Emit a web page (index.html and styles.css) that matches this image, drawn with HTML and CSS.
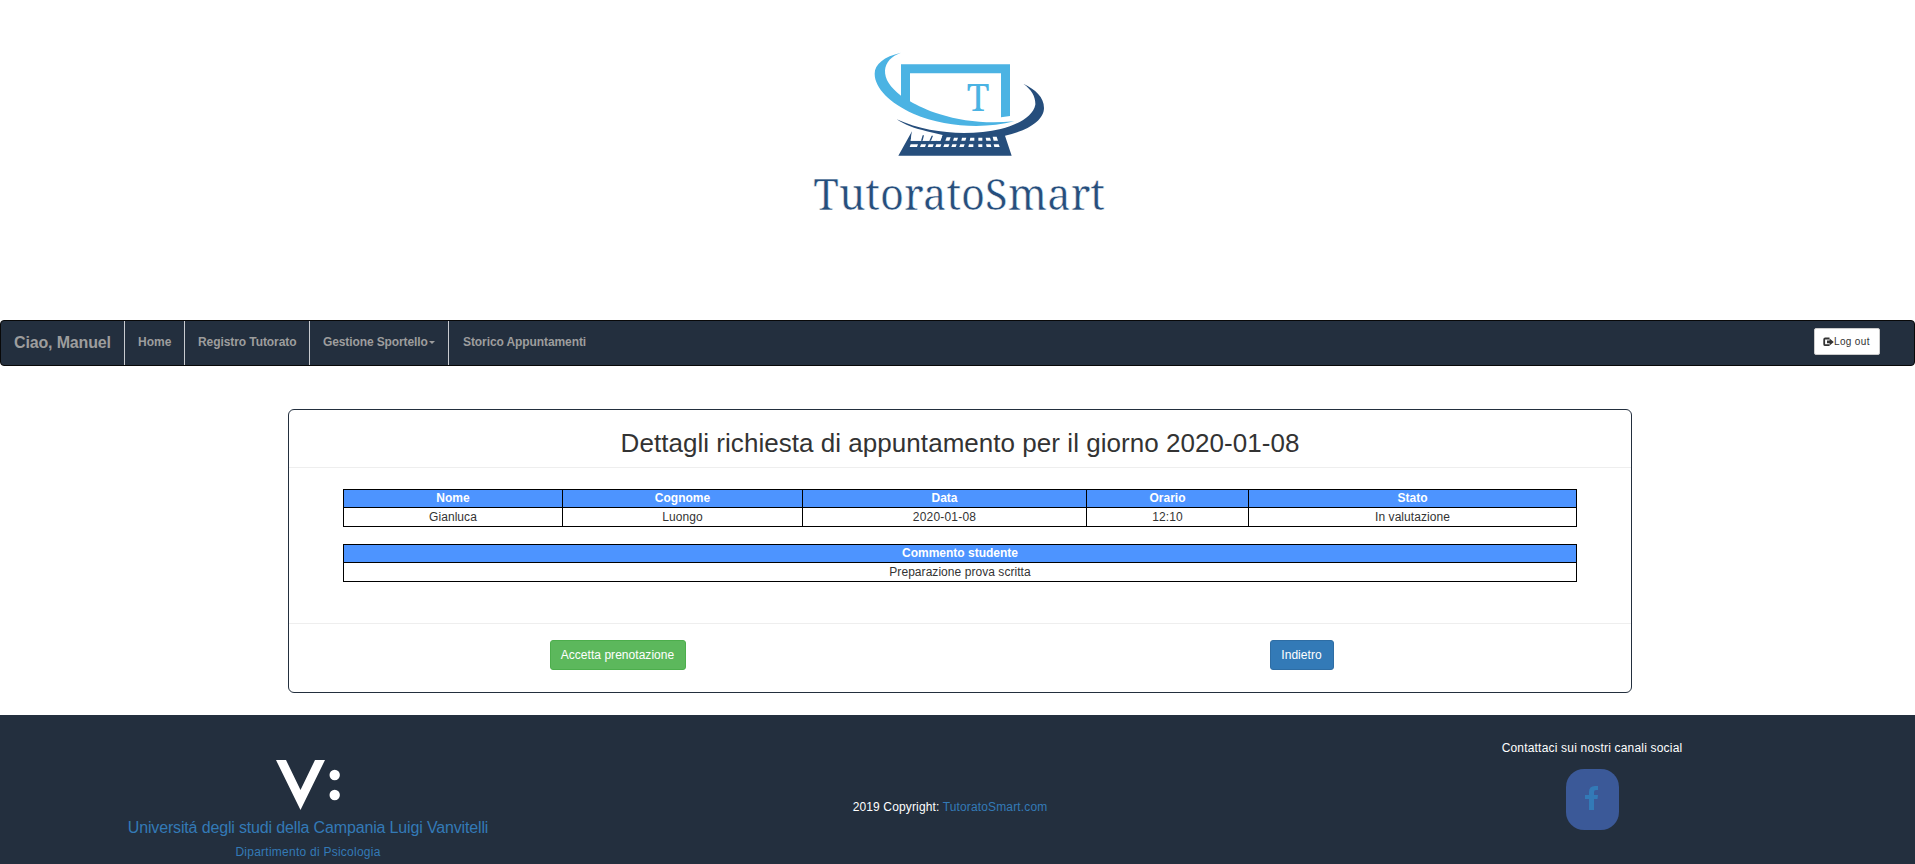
FILE: index.html
```html
<!DOCTYPE html>
<html lang="it">
<head>
<meta charset="utf-8">
<title>TutoratoSmart</title>
<link rel="stylesheet" href="styles.css">
</head>
<body>
<header class="banner">
  <svg class="logo" viewBox="0 0 1020 600" role="img" aria-label="TutoratoSmart">
    <g transform="translate(240 54)">
      <path fill="#4bb3e3" d="M93 14C42 26 14 48 14 77C14 120 60 165 130 197C225 237 340 244 433 220C350 228 275 220 210 199C170 187 143 173 120 160V76H393V208L420 204V49H93V143C60 118 44 93 45 67C47 43 64 24 93 14Z"/>
      <path fill="#264e7c" d="M460 107C486 126 497 147 496 170C489 204 446 230 392 243C300 264 180 259 80 214C104 231 134 241 170 250L218 261L210 278H122L126 250L85 323H425L405 263C475 248 522 216 522 180C522 147 496 124 460 107Z"/>
      <path fill="#fff" d="M126 252L131 278H122ZM126 253L160 262L153 278H124ZM162 262L185 263L178 278H156ZM187 263L205 264L199 278H181Z"/>
      <path fill="#264e7c" d="M153 278L158 262L162 262L158 278ZM178 278L185 263L189 263L183 278Z"/>
      <path fill="#fff" d="M206 265L216 265L212 278H200ZM230 268H242L238 278H226ZM252 269H264L261 278H249ZM276 269H289L286 278H274ZM301 269H313V278H299ZM325 269H337V278H325ZM347 269H360L363 278H349ZM368 266H380L384 278H371ZM122 289H144L141 297H119ZM153 289H168L165 297H150ZM176 289H191L188 297H173ZM199 289H214L211 297H196ZM223 289H238L235 297H220ZM247 289H260L257 297H244ZM271 289H284L281 297H268ZM297 289H310V297H295ZM325 289H337V297H325ZM348 289H362L364 297H350ZM371 289H386L389 297H373Z"/>
    </g>
    <text class="logo-letter" x="530" y="242" textLength="68" lengthAdjust="spacingAndGlyphs">T</text>
    <text class="logo-name" x="70" y="539" textLength="875" lengthAdjust="spacingAndGlyphs">TutoratoSmart</text>
  </svg>
</header>
<nav class="navbar">
  <a class="nav-item brand">Ciao, Manuel</a>
  <a class="nav-item home">Home</a>
  <a class="nav-item registro">Registro Tutorato</a>
  <a class="nav-item gestione"><span>Gestione Sportello</span><span class="caret"></span></a>
  <a class="nav-item storico">Storico Appuntamenti</a>
  <button class="logout"><svg class="logout-icon" viewBox="0 0 11 10"><path d="M6.500 1.500H2.200Q1.200 1.500 1.200 2.500V7.200Q1.200 8.200 2.200 8.200H6.500" fill="none" stroke="#333" stroke-width="1.800"/><path d="M4 3.500H6.600V1.400L10.800 4.900L6.600 8.400V6.300H4Z" fill="#333"/></svg><span>Log out</span></button>
</nav>
<main class="card">
  <h2 class="title"><span>Dettagli richiesta di appuntamento per il giorno 2020-01-08</span></h2>
  <section class="details">
    <table class="table">
      <colgroup><col class="c1"><col class="c2"><col class="c3"><col class="c4"><col class="c5"></colgroup>
      <tr><th>Nome</th><th>Cognome</th><th>Data</th><th>Orario</th><th>Stato</th></tr>
      <tr><td>Gianluca</td><td>Luongo</td><td class="date">2020-01-08</td><td>12:10</td><td>In valutazione</td></tr>
    </table>
    <table class="table">
      <tr><th>Commento studente</th></tr>
      <tr><td>Preparazione prova scritta</td></tr>
    </table>
  </section>
  <div class="actions">
    <button class="btn accept">Accetta prenotazione</button>
    <button class="btn back">Indietro</button>
  </div>
</main>
<footer class="footer">
  <div class="university">
    <svg class="uni-logo" viewBox="0 0 64 50"><path fill="#fff" d="M0 0H10L24.500 30L39 0H49L24.500 50Z"/><circle cx="58.700" cy="15" r="5.200" fill="#fff"/><circle cx="58.700" cy="35" r="5.200" fill="#fff"/></svg>
    <a class="uni-name">Universitá degli studi della Campania Luigi Vanvitelli</a>
    <a class="uni-dept">Dipartimento di Psicologia</a>
  </div>
  <div class="copyright">2019 Copyright: <a>TutoratoSmart.com</a></div>
  <div class="social">
    <span class="social-text">Contattaci sui nostri canali social</span>
    <a class="facebook"><svg class="fb-icon" viewBox="0 0 14 24"><path fill="#337ab7" d="M4 24V13H0V9H4V6Q4 0 10 0H13V4H11Q9 4 9 6V9H13L12.500 13H9V24Z"/></svg></a>
  </div>
</footer>
</body>
</html>
```
FILE: styles.css
```css
* { box-sizing: border-box; }
body { margin: 0; height: 864px; overflow: hidden; background: #fff; color: #333; font: 12px/17px "Liberation Sans", Arial, sans-serif; }
button { font-family: inherit; margin: 0; }
.banner { height: 320px; padding: 30px 0 0 790px; }
.logo { display: block; width: 340px; height: 200px; }
.logo-letter { font: 115px "Noto Serif", "DejaVu Serif", serif; fill: #4bb3e3; }
.logo-name { font: 129px "Noto Serif", "DejaVu Serif", serif; fill: #264e7c; stroke: #fff; stroke-width: 1.5px; }
.navbar { display: flex; height: 46px; background: #232f3e; border: 1px solid #080808; border-radius: 4px; color: #9d9d9d; font-weight: bold; }
.nav-item { display: flex; align-items: center; padding: 0 0 1px 13px; border-right: 1px solid #c8cbd0; white-space: nowrap; }
.brand { width: 124px; font-size: 16px; letter-spacing: -.15px; }
.home { width: 60px; }
.registro { width: 125px; letter-spacing: -.08px; }
.gestione { width: 139px; letter-spacing: -.11px; }
.storico { width: 160px; padding-left: 14px; border-right: 0; letter-spacing: -.09px; }
.caret { margin-left: 1px; border-top: 3px solid #9d9d9d; border-left: 3px solid transparent; border-right: 3px solid transparent; }
.logout { display: flex; align-items: center; width: 66px; height: 27px; margin: 7px 34px 0 auto; padding: 0 0 0 9px; border: 1px solid #ccc; border-radius: 2px; background: #fff; color: #333; font-size: 10px; letter-spacing: .35px; white-space: nowrap; }
.logout-icon { width: 11px; height: 10px; margin-left: -1px; flex: none; }
.card { width: 1344px; height: 284px; margin: 43px 0 0 288px; border: 1px solid #232f3e; border-radius: 6px; }
.title { display: flex; align-items: center; justify-content: center; height: 58px; margin: 0; padding-top: 9px; border-bottom: 1px solid #eee; font-size: 26px; font-weight: normal; line-height: 30px; letter-spacing: .04px; }
.details { height: 156px; padding: 21px 54px 0; border-bottom: 1px solid #eee; }
.table { width: 1234px; margin-bottom: 17px; border-collapse: collapse; table-layout: fixed; text-align: center; }
.table th, .table td { height: 19px; padding: 0; border: 1px solid #000; line-height: 17px; }
.table th { height: 18px; background: #4d94ff; color: #fff; }
.table td { letter-spacing: .05px; }
.table .date { letter-spacing: .2px; }
.c1 { width: 219px; }
.c2 { width: 240px; }
.c3 { width: 284px; }
.c4 { width: 162px; }
.c5 { width: 328px; }
.actions { display: flex; justify-content: space-between; padding: 16px 297px 0 261px; }
.btn { height: 30px; padding: 0 1px 0 0; border-radius: 3px; color: #fff; font-size: 12px; letter-spacing: .04px; }
.accept { width: 136px; background: #5cb85c; border: 1px solid #4cae4c; }
.back { width: 64px; background: #337ab7; border: 1px solid #2e6da4; }
.footer { display: grid; grid-template-columns: 616px 668px 631px; height: 149px; margin-top: 22px; background: #232f3e; color: #fff; }
.footer a { color: #337ab7; }
.university { display: flex; flex-direction: column; align-items: center; padding-top: 45px; }
.uni-logo { width: 64px; height: 50px; }
.uni-name { margin-top: 9px; font-size: 16px; line-height: 18px; letter-spacing: -.155px; }
.uni-dept { margin-top: 7px; letter-spacing: .25px; }
.copyright { padding-top: 84px; text-align: center; letter-spacing: .14px; }
.social { display: flex; flex-direction: column; align-items: center; padding: 25px 15px 0 0; }
.social-text { letter-spacing: .19px; }
.facebook { display: flex; justify-content: center; width: 53px; height: 61px; margin-top: 12px; padding-top: 17px; border-radius: 18px; background: #3b5998; }
.fb-icon { width: 14px; height: 24px; }
```
